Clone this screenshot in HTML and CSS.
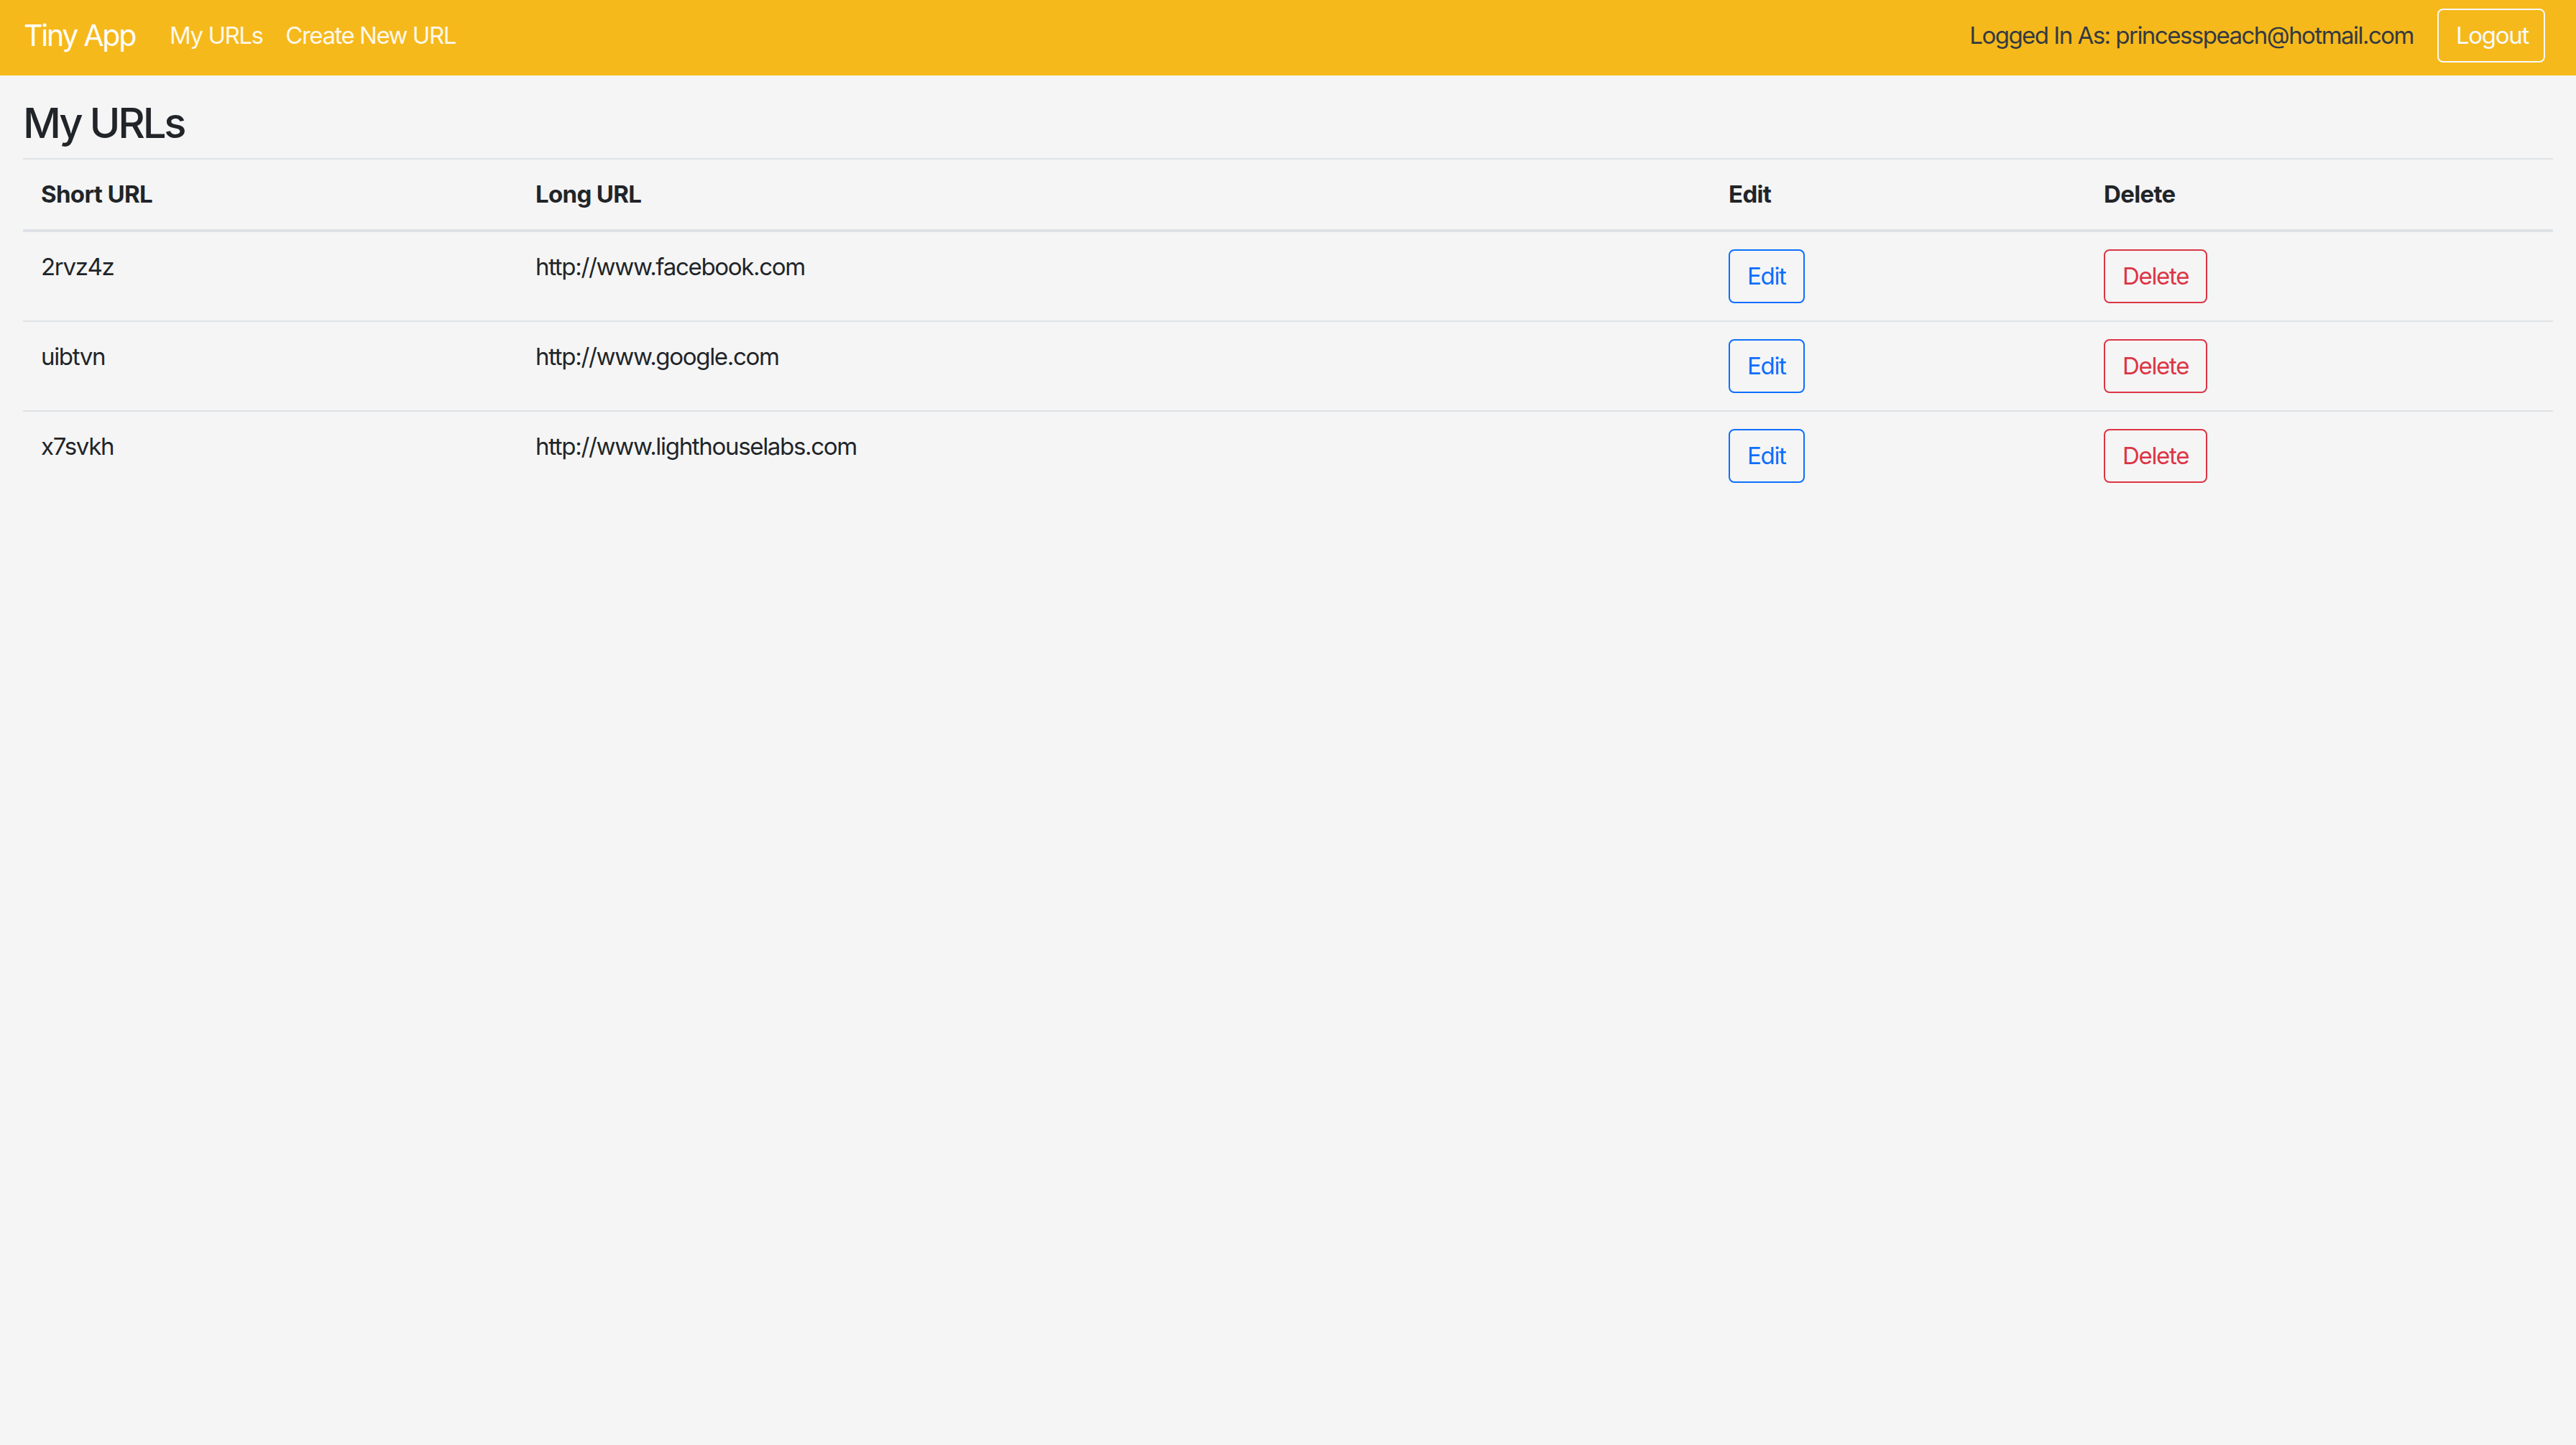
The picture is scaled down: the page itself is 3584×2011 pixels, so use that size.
FILE: index.html
```html
<!DOCTYPE html>
<html lang="en">
<head>
<meta charset="utf-8">
<title>Tiny App</title>
<link rel="stylesheet" href="styles.css">
</head>
<body>
<nav class="navbar">
  <a class="brand" href="#">Tiny App</a>
  <div class="nav-links">
    <a class="nav-link" href="#">My URLs</a>
    <a class="nav-link" href="#">Create New URL</a>
  </div>
  <div class="nav-right">
    <span class="logged">Logged In As: princesspeach@hotmail.com</span>
    <button class="btn btn-logout">Logout</button>
  </div>
</nav>
<main class="content">
  <h2 class="title">My URLs</h2>
  <table class="urls">
    <colgroup>
      <col class="c-short">
      <col class="c-long">
      <col class="c-edit">
      <col class="c-del">
    </colgroup>
    <thead>
      <tr><th>Short URL</th><th>Long URL</th><th>Edit</th><th>Delete</th></tr>
    </thead>
    <tbody>
      <tr>
        <td>2rvz4z</td><td>http://www.facebook.com</td>
        <td><button class="btn btn-edit">Edit</button></td>
        <td><button class="btn btn-delete">Delete</button></td>
      </tr>
      <tr>
        <td>uibtvn</td><td>http://www.google.com</td>
        <td><button class="btn btn-edit">Edit</button></td>
        <td><button class="btn btn-delete">Delete</button></td>
      </tr>
      <tr>
        <td>x7svkh</td><td>http://www.lighthouselabs.com</td>
        <td><button class="btn btn-edit">Edit</button></td>
        <td><button class="btn btn-delete">Delete</button></td>
      </tr>
    </tbody>
  </table>
</main>
</body>
</html>
```
FILE: styles.css
```css
* { box-sizing: border-box; }
html, body {
  margin: 0;
  padding: 0;
  background: #f5f5f5;
  font-family: Inter, "Noto Sans", "Liberation Sans", sans-serif;
  color: #212529;
  font-size: 33px;
  line-height: 1.5;
  letter-spacing: -0.04em;
}
.navbar {
  height: 105px;
  background: #f6b91c;
  display: flex;
  align-items: center;
  padding: 0 43px 6px 33px;
}
.brand {
  color: #fff;
  text-decoration: none;
  font-size: 41px;
  line-height: 1.2;
  letter-spacing: -0.055em;
}
.nav-links {
  display: flex;
  gap: 32px;
  margin-left: 48px;
}
.nav-link {
  color: rgba(255,255,255,0.92);
  text-decoration: none;
  font-size: 33px;
  letter-spacing: -0.045em;
}
.nav-right {
  margin-left: auto;
  display: flex;
  align-items: center;
  gap: 33px;
}
.logged {
  color: #343a40;
  font-size: 33px;
  letter-spacing: -0.046em;
}
.btn {
  font-family: inherit;
  font-size: 33px;
  line-height: 1.5;
  letter-spacing: -0.04em;
  background: transparent;
  border: 2px solid;
  border-radius: 8px;
  height: 75px;
  padding: 0 24px;
  cursor: pointer;
}
.btn-logout {
  color: #f8f9fa;
  border-color: #f8f9fa;
  width: 150px;
}
.btn-edit {
  color: #0d6efd;
  border-color: #0d6efd;
}
.btn-delete {
  color: #dc3545;
  border-color: #dc3545;
}
.content {
  padding: 0 32px;
}
.title {
  margin: 32px 0 13px;
  font-size: 58px;
  font-weight: 500;
  line-height: 1.2;
  letter-spacing: -0.055em;
}
.urls {
  width: 100%;
  border-collapse: collapse;
  table-layout: fixed;
}
.c-short { width: 688px; }
.c-long { width: 1660px; }
.c-edit { width: 522px; }
.c-del { width: 650px; }
.urls th, .urls td {
  text-align: left;
  vertical-align: top;
  padding: 24px 25px;
}
.urls th {
  font-weight: 700;
  letter-spacing: -0.02em;
  border-top: 2px solid #dee2e6;
  border-bottom: 4px solid #dee2e6;
}
.urls tbody tr + tr td {
  border-top: 2px solid #dee2e6;
}
```
